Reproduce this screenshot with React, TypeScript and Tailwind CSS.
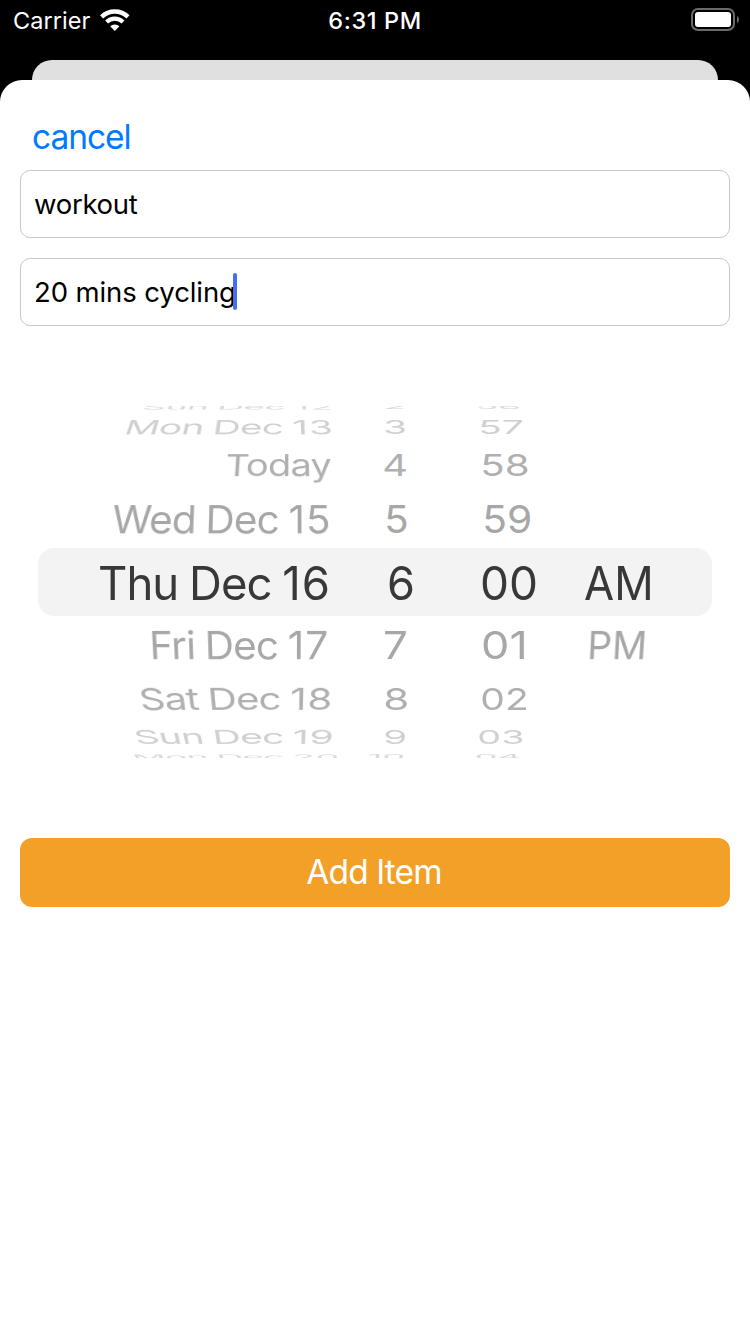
import { useLayoutEffect, useRef, useState } from "react";

type Cell = { text: string; left: number; right: number; pivot?: number };
type Row = { height: number; scaleY: number; taper: number; tone: string; cells: Cell[] };

const ROWS: Row[] = [
  { height: 14, scaleY: 0.145, taper: -0.004, tone: "text-[#dadada]", cells: [
    { text: "Sun Dec 12", left: 144, right: 330.5, pivot: 285 }, { text: "2", left: 385, right: 404 }, { text: "56", left: 477, right: 520 } ] },
  { height: 26, scaleY: 0.42, taper: -0.0022, tone: "text-[#d0d0d0]", cells: [
    { text: "Mon Dec 13", left: 126.5, right: 330, pivot: 285 }, { text: "3", left: 385, right: 405 }, { text: "57", left: 479.5, right: 521.5 } ] },
  { height: 50, scaleY: 0.65, taper: -0.0013, tone: "text-[#b0b0b0]", cells: [
    { text: "Today", left: 227, right: 329.5, pivot: 290 }, { text: "4", left: 384, right: 406.5 }, { text: "58", left: 482, right: 527.5 } ] },
  { height: 58, scaleY: 0.845, taper: -0.0004, tone: "text-[#a7a7a7]", cells: [
    { text: "Wed Dec 15", left: 114, right: 328, pivot: 285 }, { text: "5", left: 385.5, right: 406.5 }, { text: "59", left: 483.5, right: 530.5 } ] },
  { height: 68, scaleY: 1, taper: 0, tone: "text-[#383838]", cells: [
    { text: "Thu Dec 16", left: 99.5, right: 327 }, { text: "6", left: 389, right: 413.5 }, { text: "00", left: 482, right: 536 }, { text: "AM", left: 586, right: 651.5 } ] },
  { height: 58, scaleY: 0.845, taper: 0.0004, tone: "text-[#a7a7a7]", cells: [
    { text: "Fri Dec 17", left: 151, right: 325.5, pivot: 285 }, { text: "7", left: 385, right: 406 }, { text: "01", left: 483, right: 526 }, { text: "PM", left: 588.5, right: 645, pivot: 480 } ] },
  { height: 50, scaleY: 0.65, taper: 0.0013, tone: "text-[#b0b0b0]", cells: [
    { text: "Sat Dec 18", left: 140.5, right: 329.5, pivot: 285 }, { text: "8", left: 384.5, right: 406.5 }, { text: "02", left: 481.5, right: 526.5 } ] },
  { height: 26, scaleY: 0.42, taper: 0.0022, tone: "text-[#d0d0d0]", cells: [
    { text: "Sun Dec 19", left: 135.5, right: 330.5, pivot: 285 }, { text: "9", left: 384.5, right: 405.5 }, { text: "03", left: 479, right: 522.5 } ] },
  { height: 14, scaleY: 0.145, taper: 0.004, tone: "text-[#dadada]", cells: [
    { text: "Mon Dec 20", left: 134, right: 337, pivot: 285 }, { text: "10", left: 369, right: 404 }, { text: "04", left: 476, right: 520 } ] },
];

// Space on each side of a glyph run at the wheel's base size.
const BEARING = 2;

function WheelCell({ cell, gap, row }: { cell: Cell; gap: number; row: Row }) {
  const label = useRef<HTMLSpanElement>(null);
  const width = cell.right - cell.left;
  const [scaleX, setScaleX] = useState(1);
  useLayoutEffect(() => {
    if (label.current) setScaleX(width / (label.current.offsetWidth - BEARING * 2));
  }, [width]);
  const taper = cell.pivot === undefined ? 0 : row.taper;
  return (
    <div
      className="flex shrink-0 items-center justify-start"
      style={{
        width,
        marginLeft: gap,
        transformOrigin: `${(cell.pivot ?? cell.left) - cell.left}px 50%`,
        transform: taper ? `matrix3d(1,0,0,0,0,1,0,${taper},0,0,1,0,0,0,0,1)` : undefined,
      }}
    >
      <div className="origin-left" style={{ transform: `scale(${scaleX}, ${row.scaleY}) translateX(${-BEARING}px)` }}>
        <span
          ref={label}
          className={`inline-block text-[46px] leading-[68px] whitespace-pre ${row.scaleY === 1 ? "pt-px" : "pt-0"} ${cell.text.length > 2 ? "tracking-[-1px] [word-spacing:-1px]" : "tracking-normal"}`}
        >
          {cell.text.length > 5 ? (
            <>
              {cell.text.slice(0, -2)}
              <span className="tracking-[1px]">{cell.text.slice(-2, -1)}</span>
              {cell.text.slice(-1)}
            </>
          ) : (
            cell.text
          )}
        </span>
      </div>
    </div>
  );
}

function DateWheel() {
  return (
    <div className="mt-20 flex h-[352px] flex-col justify-center overflow-hidden">
      {ROWS.map((row, i) => (
        <div key={i} className={`flex shrink-0 items-center ${row.tone} ${i === 4 ? "mx-[38px] rounded-[16px] bg-[#f3f3f3]" : ""}`} style={{ height: row.height }}>
          {row.cells.map((cell, j) => (
            <WheelCell key={j} cell={cell} row={row} gap={cell.left - (j ? row.cells[j - 1].right : i === 4 ? 38 : 0)} />
          ))}
        </div>
      ))}
    </div>
  );
}

function StatusBar() {
  return (
    <header className="grid h-[60px] grid-cols-3 items-start text-white">
      <div className="flex h-[41px] items-center pl-[13px]">
        <span className="pt-px text-[23.5px] tracking-[0.05px]">Carrier</span>
        <svg className="ml-[10px]" width="30" height="23" viewBox="0 0 30 23" fill="none" stroke="white">
          <path d="M1.6 7.8a19 19 0 0 1 26.4 0" strokeWidth="4.4" />
          <path d="M6.6 13a11.9 11.9 0 0 1 16.4 0" strokeWidth="4.2" />
          <path d="M14.8 22 10.2 17.3a6.6 6.6 0 0 1 9.2 0Z" fill="white" stroke="none" />
        </svg>
      </div>
      <div className="flex h-[41px] items-center justify-center pt-px text-[23.5px] font-medium tracking-[0.6px]">6:31 PM</div>
      <div className="flex h-[39px] items-center justify-end pr-[11px]">
        <svg width="48" height="23" viewBox="0 0 48 23">
          <rect x="1" y="1" width="42" height="21" rx="6" fill="none" stroke="#6b6b6b" strokeWidth="2" />
          <rect x="4" y="4" width="36" height="15" rx="3" fill="white" />
          <path d="M46 8q2 1 2 3.5t-2 3.5z" fill="#6b6b6b" />
        </svg>
      </div>
    </header>
  );
}

export default function App() {
  return (
    <div className="flex h-[1334px] w-[750px] flex-col overflow-hidden bg-black font-['Inter',sans-serif]">
      <StatusBar />
      <div className="mx-8 h-5 shrink-0 rounded-t-[20px] bg-[#e0e0e0]" />
      <main className="flex-1 rounded-t-[22px] bg-white">
        <div className="flex h-[90px] items-end pb-2 pl-8">
          <button className="text-[33.5px] leading-[50px] tracking-[-1.05px] text-[#007aff]">cancel</button>
        </div>
        <div className="flex flex-col gap-5 px-5 text-[27.5px] tracking-[-0.3px] text-black">
          <div className="flex h-[68px] items-center rounded-[10px] border border-[#c8c8c8] pl-[13px]">
            <span className="pt-[2px]">workout</span>
          </div>
          <div className="flex h-[68px] items-center rounded-[10px] border border-[#c8c8c8] pl-[13px]">
            <span className="pt-[2px] tracking-[-0.1px]">20 mins cycling</span>
            <span className="mb-[2px] -ml-[3px] h-[37px] w-1 rounded-sm bg-[#466ef0]" />
          </div>
        </div>
        <DateWheel />
        <div className="px-5 pt-20">
          <button className="h-[69px] w-full rounded-[12px] bg-[#f2a027] pr-[2px] text-[33.5px] tracking-[-0.9px] text-white">Add Item</button>
        </div>
      </main>
    </div>
  );
}
